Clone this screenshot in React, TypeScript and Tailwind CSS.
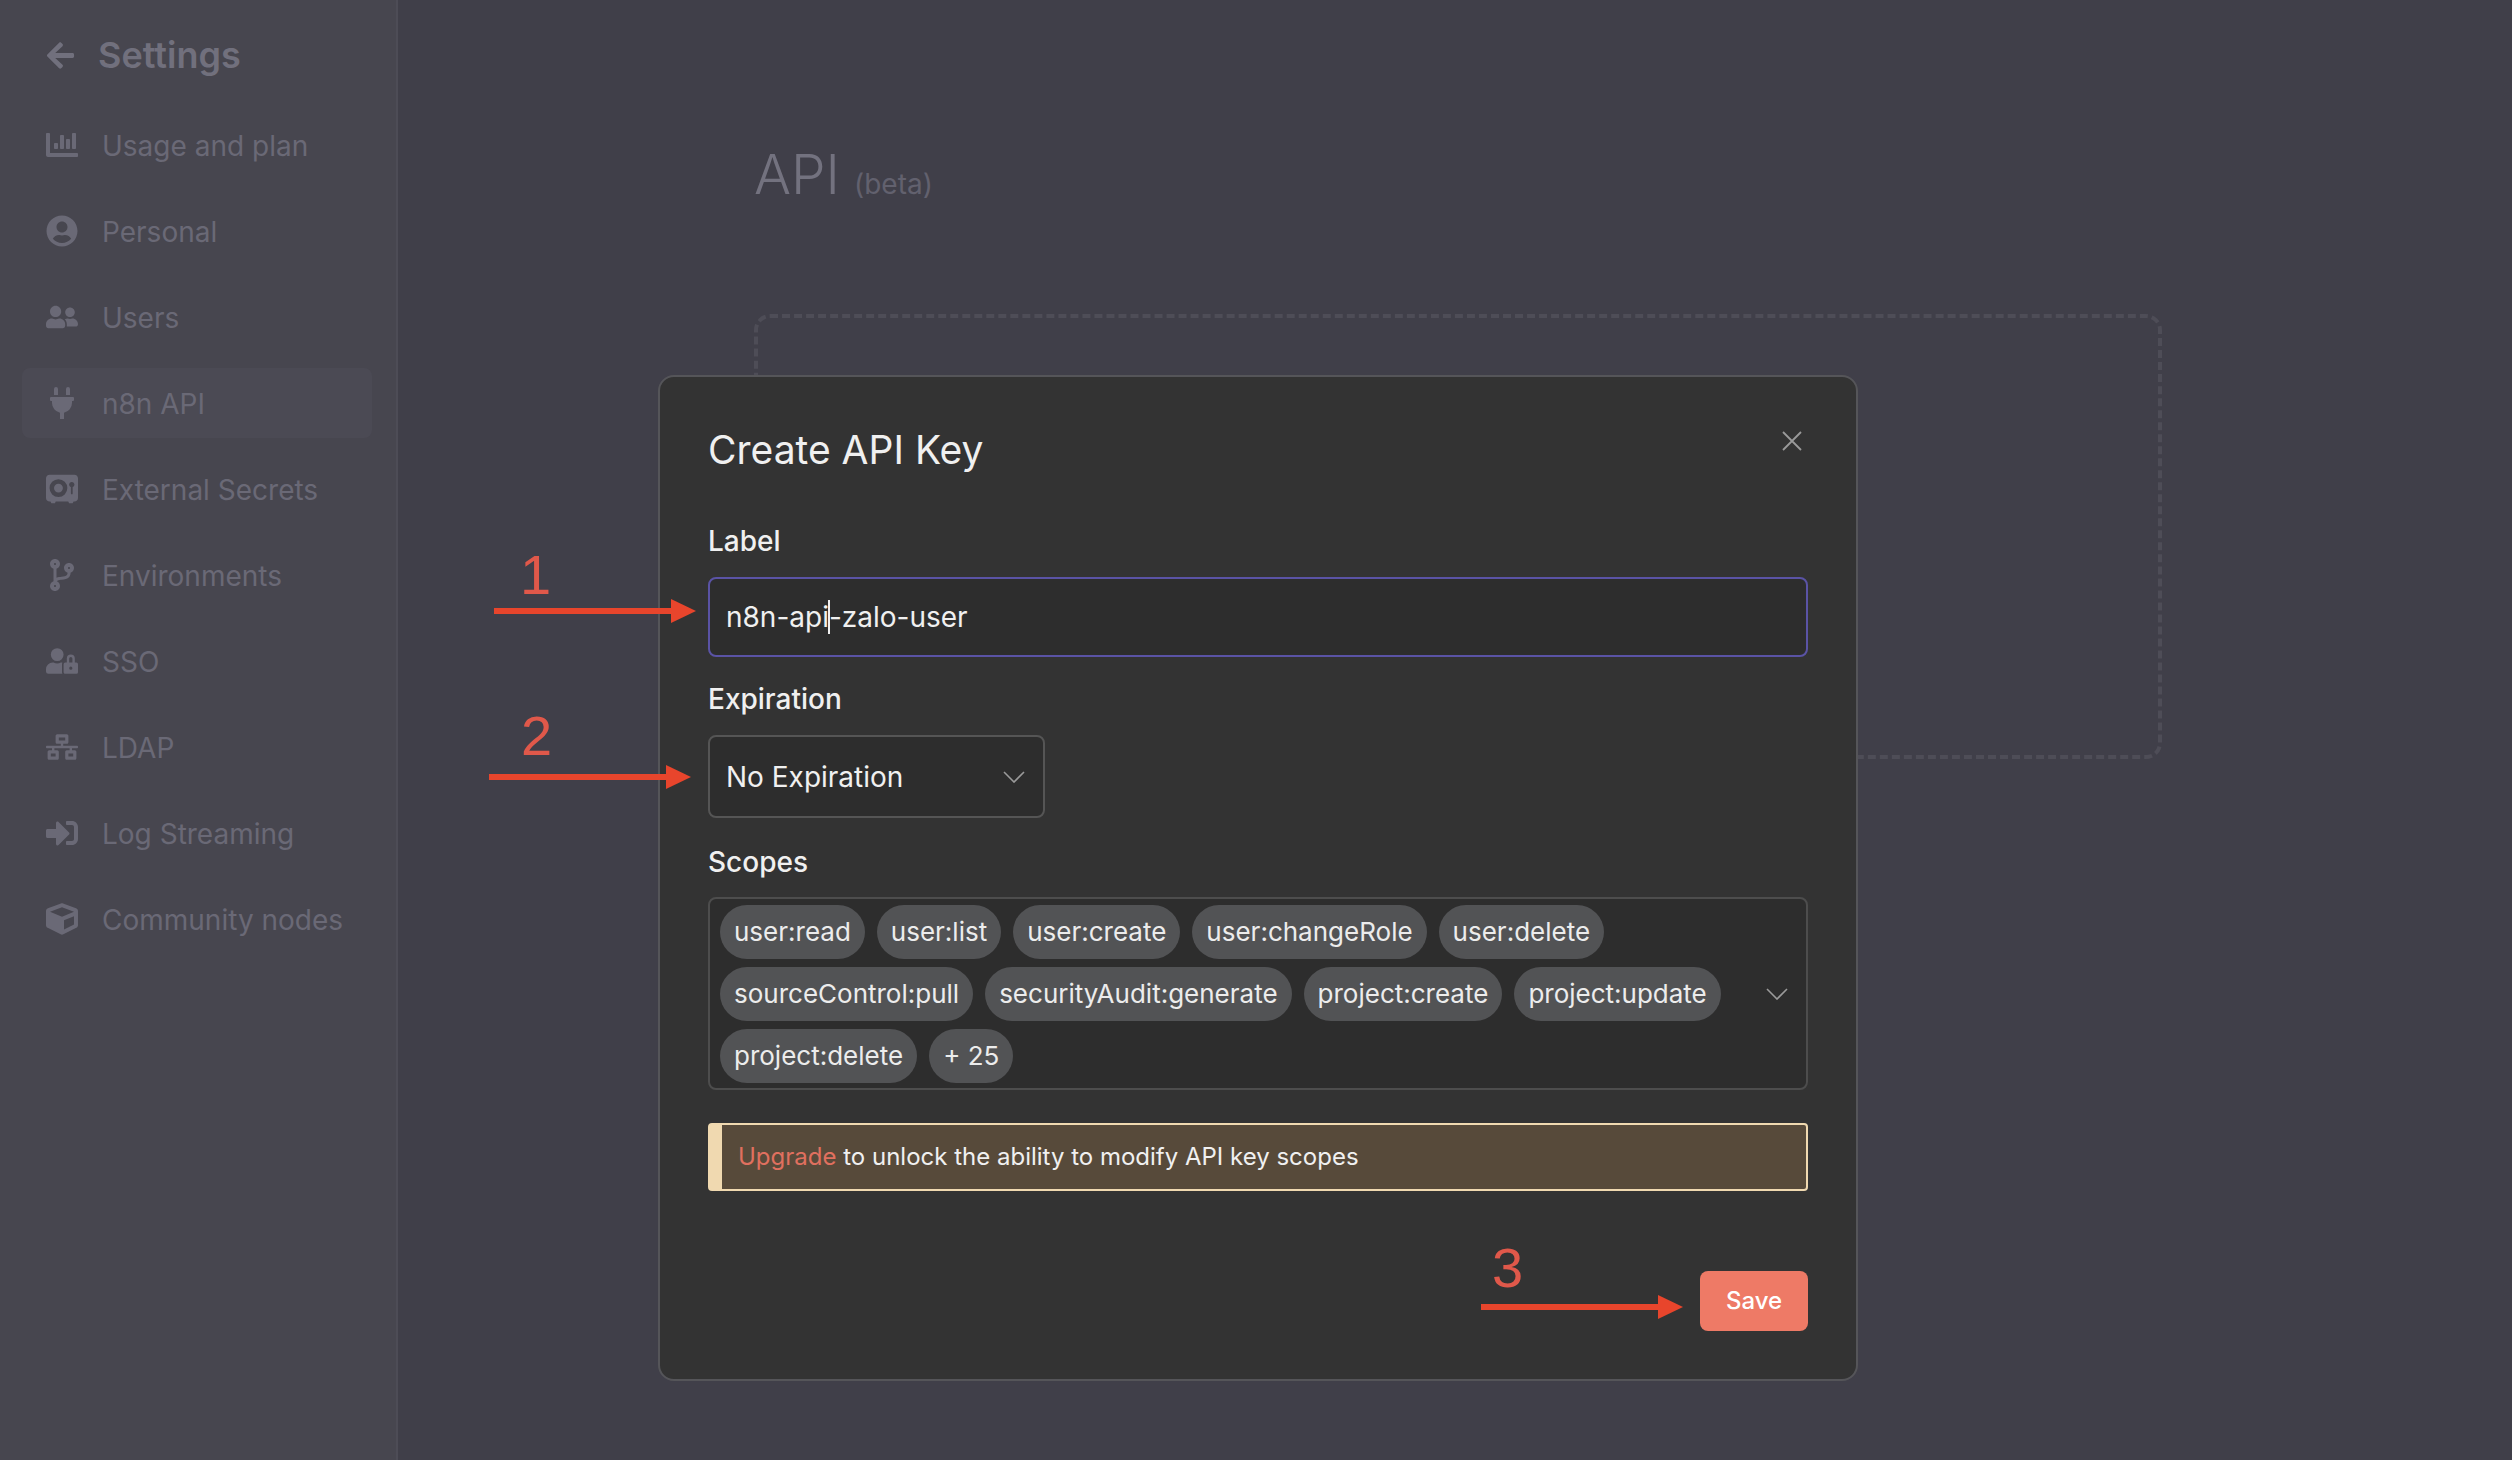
import { ReactNode } from "react"
import {
  FaArrowLeft,
  FaChartBar,
  FaCodeBranch,
  FaCube,
  FaNetworkWired,
  FaPlug,
  FaSignInAlt,
  FaUserCircle,
  FaUserFriends,
  FaUserLock,
} from "react-icons/fa"
import { FaVault } from "react-icons/fa6"

const navItems = [
  { label: "Usage and plan", icon: <FaChartBar size={32} /> },
  { label: "Personal", icon: <FaUserCircle size={32} /> },
  { label: "Users", icon: <FaUserFriends size={32} /> },
  { label: "n8n API", icon: <FaPlug size={32} />, active: true },
  { label: "External Secrets", icon: <FaVault size={32} /> },
  { label: "Environments", icon: <FaCodeBranch size={32} /> },
  { label: "SSO", icon: <FaUserLock size={32} /> },
  { label: "LDAP", icon: <FaNetworkWired size={32} /> },
  { label: "Log Streaming", icon: <FaSignInAlt size={32} /> },
  { label: "Community nodes", icon: <FaCube size={32} /> },
]

const scopes = [
  "user:read",
  "user:list",
  "user:create",
  "user:changeRole",
  "user:delete",
  "sourceControl:pull",
  "securityAudit:generate",
  "project:create",
  "project:update",
  "project:delete",
  "+ 25",
]

function Chevron() {
  return (
    <svg className="shrink-0" width="22" height="12" viewBox="0 0 22 12" fill="none" stroke="#9a9a9a" strokeWidth="1.6">
      <path d="M1 1l10 10L21 1" />
    </svg>
  )
}

function FieldLabel({ children, className }: { children: ReactNode; className: string }) {
  return <div className={`h-[40px] text-[28px] leading-[40px] font-medium text-[#f0f0f0] ${className}`}>{children}</div>
}

// red annotation arrow drawn over the page
function Arrow({ className, width }: { className: string; width: number }) {
  return (
    <svg className={`absolute ${className}`} width={width} height="26" viewBox={`0 0 ${width} 26`} fill="#e8452c">
      <rect x="0" y="10" width={width - 20} height="6" />
      <path d={`M${width - 25} 1L${width} 13L${width - 25} 25z`} />
    </svg>
  )
}

function StepNumber({ className, children }: { className: string; children: ReactNode }) {
  return (
    <div className={`absolute text-[56px] leading-[64px] text-[#e0584a] font-['Liberation_Sans',sans-serif] ${className}`}>
      {children}
    </div>
  )
}

export default function App() {
  return (
    <div className="relative flex h-[1460px] w-[2512px] overflow-hidden bg-[#403f49] font-['Inter',sans-serif]">
      <aside className="h-full w-[398px] shrink-0 border-r-2 border-[#4d4c56] bg-[#47464f] pl-[22px] pr-[24px] pt-[30px]">
        <div className="flex h-[50px] items-center gap-[24px] pl-[23px] text-[#71707d]">
          <div className="w-[29px]">
            <FaArrowLeft size={31} />
          </div>
          <span className="text-[36px] font-semibold">Settings</span>
        </div>
        <nav className="mt-[30px] flex flex-col gap-[16px]">
          {navItems.map((item) => (
            <div
              key={item.label}
              className={`flex h-[70px] items-center gap-[24px] rounded-lg pl-[24px] text-[28px] text-[#6a6976] ${
                item.active ? "bg-[#4b4a54]" : ""
              }`}
            >
              <div className="flex w-[32px] justify-center">{item.icon}</div>
              <span className="pt-[2px]">{item.label}</span>
            </div>
          ))}
        </nav>
      </aside>

      <main className="flex-1 pl-[356px] pr-[350px] pt-[139px]">
        <div className="flex items-baseline gap-[14px] text-[#73727f]">
          <h1 className="text-[55px] leading-[70px] font-light">API</h1>
          <span className="text-[28px] text-[#62616e]">(beta)</span>
        </div>
        <div className="mt-[105px] h-[445px] rounded-2xl border-4 border-dashed border-[#4e4d57]" />
      </main>

      <div className="absolute left-[658px] top-[375px] h-[1006px] w-[1200px] rounded-2xl border-2 border-[#555559] bg-[#333333] px-[48px] pt-[43px] text-[#f0f0f0]">
        <button className="absolute right-[54px] top-[54px] text-[#9a9a9a]">
          <svg className="block" width="20" height="20" viewBox="0 0 20 20" fill="none" stroke="currentColor" strokeWidth="1.8">
            <path d="M1 1l18 18M19 1L1 19" />
          </svg>
        </button>
        <h2 className="h-[60px] text-[39px] leading-[60px]">Create API Key</h2>

        <FieldLabel className="mt-[41px]">Label</FieldLabel>
        <div className="mt-[16px] flex h-[80px] items-center rounded-lg border-2 border-[#5a53a5] bg-[#2d2d2d] pl-[16px] text-[28px]">
          n8n-api
          <span className="-mx-[1px] inline-block h-[34px] w-[2px] bg-[#f0f0f0]" />
          -zalo-user
        </div>

        <FieldLabel className="mt-[22px]">Expiration</FieldLabel>
        <div className="mt-[16px] flex h-[83px] w-[337px] items-center justify-between rounded-lg border-2 border-[#555555] bg-[#2d2d2d] pl-[16px] pr-[18px] text-[28px]">
          <span>No Expiration</span>
          <Chevron />
        </div>

        <FieldLabel className="mt-[24px]">Scopes</FieldLabel>
        <div className="mt-[15px] flex h-[193px] items-center rounded-lg border-2 border-[#4d4d4d] bg-[#2d2d2d] pl-[10px] pr-[18px]">
          <div className="flex flex-1 flex-wrap content-center gap-x-[12px] gap-y-[8px] pr-[20px]">
            {scopes.map((scope) => (
              <span
                key={scope}
                className="flex h-[54px] items-center rounded-full bg-[#525355] px-[14px] text-[26px] text-[#ececec]"
              >
                {scope}
              </span>
            ))}
          </div>
          <Chevron />
        </div>

        <div className="mt-[33px] flex h-[68px] items-center rounded border-2 border-l-[14px] border-[#f0d9b0] bg-[#574a3a] pl-[16px] text-[24px] text-[#f0f0f0]">
          <span>
            <span className="text-[#e0705f]">Upgrade</span> to unlock the ability to modify API key scopes
          </span>
        </div>

        <div className="mt-[80px] flex justify-end">
          <button className="h-[60px] w-[108px] rounded-lg bg-[#ee7a66] text-[24px] font-medium text-white">Save</button>
        </div>
      </div>

      <StepNumber className="left-[520px] top-[543px]">1</StepNumber>
      <Arrow className="left-[494px] top-[598px]" width={202} />
      <StepNumber className="left-[521px] top-[704px]">2</StepNumber>
      <Arrow className="left-[489px] top-[764px]" width={202} />
      <StepNumber className="left-[1492px] top-[1236px]">3</StepNumber>
      <Arrow className="left-[1481px] top-[1294px]" width={202} />
    </div>
  )
}
